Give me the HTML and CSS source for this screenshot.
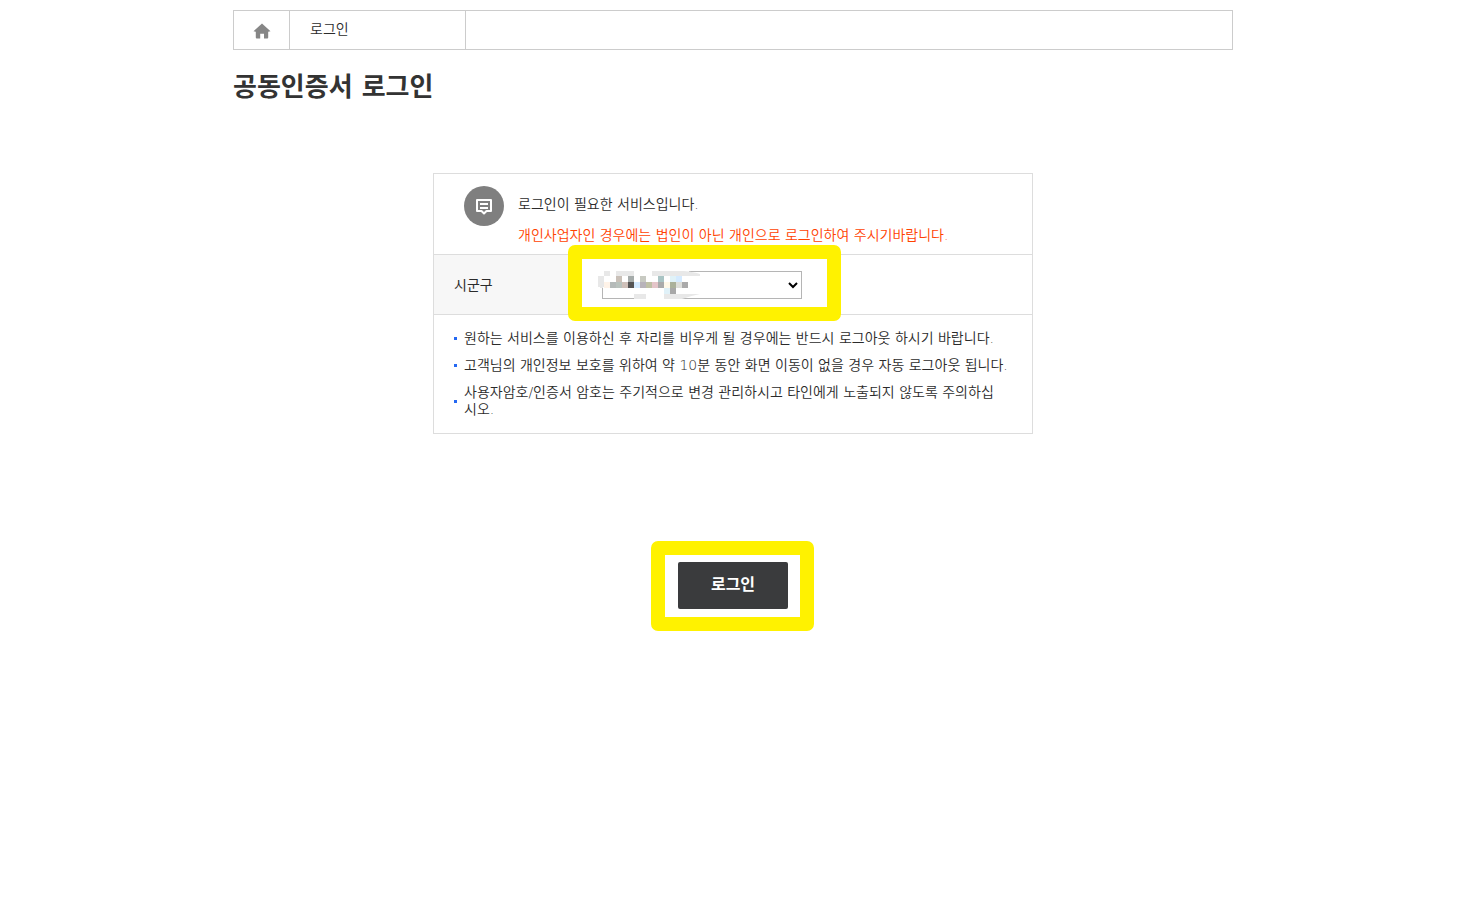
FILE: index.html
```html
<!DOCTYPE html>
<html lang="ko">
<head>
    <meta charset="UTF-8">
    <meta name="viewport" content="width=device-width, initial-scale=1.0">
    <title>공동인증서 로그인</title>
    <link rel="stylesheet" href="styles.css">
</head>
<body>
    <div class="container">
        <nav class="breadcrumb">
            <a class="home" href="#" aria-label="홈">
                <svg width="18" height="16" viewBox="0 0 18 16" fill="#868686">
                    <path d="M9 0.5 L17.5 8.3 L15.2 8.8 V14.6 Q15.2 15.5 14.3 15.5 H11 V10.8 H7.2 V15.5 H3.7 Q2.8 15.5 2.8 14.6 V8.8 L0.5 8.3 Z"/>
                </svg>
            </a>
            <a class="current" href="#">로그인</a>
        </nav>

        <h1>공동인증서 로그인</h1>

        <form>
            <div class="login-box">
                <div class="notice">
                    <svg class="notice-icon" width="40" height="40" viewBox="0 0 40 40" fill="none">
                        <circle cx="20" cy="20" r="20" fill="#7f7f7f"/>
                        <path d="M13 14 H27 V25 H22.5 L20 27.5 L17.5 25 H13 Z" stroke="#fff" stroke-width="2" stroke-linejoin="round"/>
                        <path d="M16 18 H24 M16 22 H24" stroke="#fff" stroke-width="2"/>
                    </svg>
                    <div class="notice-text">
                        <p>로그인이 필요한 서비스입니다.</p>
                        <p class="warning">개인사업자인 경우에는 법인이 아닌 개인으로 로그인하여 주시기바랍니다.</p>
                    </div>
                </div>

                <div class="form-row">
                    <label for="region">시군구</label>
                    <div class="field">
                        <div class="select-wrap">
                            <select id="region">
                                <option></option>
                            </select>
                            <svg class="mosaic" width="102" height="28" viewBox="0 0 102 28" shape-rendering="crispEdges">
                                <path d="M0 0 H91 V5 H84 V24 H66 V28 H36 V27 H5 V17 H0 Z" fill="#fff"/>
                                <path d="M0 5 H6 V15 L4 17 L0 16 Z M6 0 H12 V5 H6 Z M18 0 H36 V5 H18 Z M36 23 H48 V28 H36 Z" fill="#e8e8e8"/>
                                <path d="M54 0 H86 Q96 1 102 3 V5 H54 Z M66 23 H102 Q92 25 84 28 H66 Z" fill="#e8e8e8" shape-rendering="auto"/>
                                <path d="M48 27 H66 V28 H48 Z" fill="#fff"/>
                                <rect x="18" y="5" width="6" height="6" fill="#c9c0b8"/>
                                <rect x="30" y="5" width="6" height="6" fill="#a5abaa"/>
                                <rect x="42" y="5" width="6" height="6" fill="#c8cac2"/>
                                <rect x="60" y="5" width="6" height="6" fill="#a9c4c4"/>
                                <rect x="72" y="5" width="6" height="6" fill="#e0f2f8"/>
                                <rect x="78" y="5" width="6" height="6" fill="#d4eaff"/>
                                <rect x="6" y="11" width="6" height="6" fill="#fff3e8"/>
                                <rect x="12" y="11" width="6" height="6" fill="#b5bab9"/>
                                <rect x="18" y="11" width="6" height="6" fill="#b9c2bd"/>
                                <rect x="24" y="11" width="6" height="6" fill="#cfc0b9"/>
                                <rect x="30" y="11" width="6" height="6" fill="#555454"/>
                                <rect x="36" y="11" width="6" height="6" fill="#d4eaff"/>
                                <rect x="42" y="11" width="6" height="6" fill="#b8b3ba"/>
                                <rect x="48" y="11" width="6" height="6" fill="#bfc0a5"/>
                                <rect x="54" y="11" width="6" height="6" fill="#e4c5c9"/>
                                <rect x="60" y="11" width="6" height="6" fill="#aaaaaa"/>
                                <rect x="66" y="11" width="6" height="6" fill="#fff8e8"/>
                                <rect x="72" y="11" width="6" height="6" fill="#abb19b"/>
                                <rect x="78" y="11" width="6" height="6" fill="#dddeda"/>
                                <rect x="84" y="11" width="6" height="6" fill="#aaaaaa"/>
                                <rect x="66" y="17" width="6" height="6" fill="#e0f1f8"/>
                                <rect x="72" y="17" width="6" height="6" fill="#a8a8a8"/>
                            </svg>
                        </div>
                    </div>
                </div>

                <ul class="guide">
                    <li>원하는 서비스를 이용하신 후 자리를 비우게 될 경우에는 반드시 로그아웃 하시기 바랍니다.</li>
                    <li>고객님의 개인정보 보호를 위하여 약 10분 동안 화면 이동이 없을 경우 자동 로그아웃 됩니다.</li>
                    <li><span>사용자암호/인증서 암호는 주기적으로 변경 관리하시고 타인에게 노출되지 않도록 주의하십<br>시오.</span></li>
                </ul>
            </div>

            <div class="actions">
                <div class="btn-wrap">
                    <button class="btn" type="button">로그인</button>
                </div>
            </div>
        </form>
    </div>
</body>
</html>
```
FILE: styles.css
```css
* {
    box-sizing: border-box;
}

body {
    margin: 0;
    padding: 10px 0 40px;
    background: #ffffff;
    color: #2b2b2b;
    font-family: "DejaVu Sans", "Noto Sans CJK KR", sans-serif;
    font-size: 14px;
    font-weight: 350;
}

.container {
    max-width: 1000px;
    margin: 0 auto;
}

.breadcrumb {
    display: flex;
    height: 40px;
    border: 1px solid #cccccc;
}

.breadcrumb a {
    display: flex;
    align-items: center;
    border-right: 1px solid #cccccc;
    color: #2b2b2b;
    text-decoration: none;
}

.breadcrumb .home {
    justify-content: center;
    width: 56px;
    padding-top: 2px;
}

.breadcrumb .current {
    width: 176px;
    padding: 0 20px 4px;
}

h1 {
    margin: 17px 0 65px;
    color: #333333;
    font-size: 26px;
    line-height: 41px;
    font-weight: bold;
}

.login-box {
    max-width: 600px;
    margin: 0 auto;
    border: 1px solid #dddddd;
}

.notice {
    display: flex;
    gap: 14px;
    padding: 12px 30px 3px;
}

.notice-icon {
    flex: none;
}

.notice-text {
    padding-top: 3px;
    line-height: 31px;
}

.notice-text p {
    margin: 0;
}

.notice-text .warning {
    color: #ff4200;
}

.form-row {
    display: flex;
    height: 61px;
    border-top: 1px solid #dddddd;
    border-bottom: 1px solid #dddddd;
}

.form-row label {
    display: flex;
    align-items: center;
    width: 148px;
    padding: 0 0 2px 20px;
    background: #f7f7f7;
    font-weight: 400;
}

.field {
    display: flex;
    flex: 1;
    align-items: center;
    padding: 0 20px;
}

.select-wrap,
.btn-wrap {
    position: relative;
}

/* yellow highlight frames */
.select-wrap::before,
.btn-wrap::before {
    content: "";
    position: absolute;
    inset: -26px -39px -22px -34px;
    border: 14px solid #fff200;
    border-radius: 7px;
    pointer-events: none;
}

.btn-wrap::before {
    inset: -21px -26px -22px -27px;
}

select {
    display: block;
    width: 200px;
    height: 28px;
    border: 1px solid #b5b5b5;
    background: #ffffff;
    font-family: inherit;
    font-size: 13px;
}

.mosaic {
    position: absolute;
    top: 0;
    left: -4px;
}

.guide {
    display: flex;
    flex-direction: column;
    gap: 10px;
    margin: 0;
    padding: 15px 20px;
    list-style: none;
    line-height: 17px;
}

.guide li {
    display: flex;
    align-items: center;
    gap: 7px;
}

.guide li::before {
    content: "";
    flex: none;
    width: 3px;
    height: 3px;
    background: #2468f2;
}

.actions {
    display: flex;
    justify-content: center;
    margin-top: 128px;
}

.btn {
    display: block;
    width: 110px;
    height: 47px;
    padding: 0 0 5px;
    border: none;
    border-radius: 2px;
    background: #3a3b3d;
    color: #ffffff;
    font-family: inherit;
    font-size: 16px;
    font-weight: bold;
    cursor: pointer;
}
```
